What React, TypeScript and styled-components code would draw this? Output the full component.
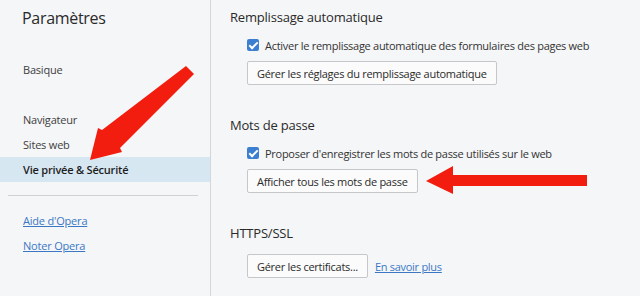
import React from "react";
import styled, { createGlobalStyle } from "styled-components";

const GlobalStyle = createGlobalStyle`
  html, body {
    margin: 0;
    padding: 0;
    background: #f5f6f8;
  }
  body {
    font-family: "Open Sans", "Noto Sans", sans-serif;
    color: #303030;
  }
`;

const App: React.FC = () => {
  return (
    <Page>
      <GlobalStyle />
      <Sidebar>
        <Title>Paramètres</Title>
        <NavGroup>
          <NavItem>Basique</NavItem>
        </NavGroup>
        <NavGroup>
          <NavItem>Navigateur</NavItem>
          <NavItem>Sites web</NavItem>
          <NavItem $active>Vie privée &amp; Sécurité</NavItem>
        </NavGroup>
        <Divider />
        <NavGroup>
          <SideLink href="#">Aide d'Opera</SideLink>
          <SideLink href="#">Noter Opera</SideLink>
        </NavGroup>
      </Sidebar>

      <Main>
        <Section>
          <SectionTitle>Remplissage automatique</SectionTitle>
          <Check>
            <Box />
            Activer le remplissage automatique des formulaires des pages web
          </Check>
          <Row>
            <Button>Gérer les réglages du remplissage automatique</Button>
          </Row>
        </Section>

        <Section>
          <SectionTitle>Mots de passe</SectionTitle>
          <Check>
            <Box />
            Proposer d'enregistrer les mots de passe utilisés sur le web
          </Check>
          <Row>
            <Button>Afficher tous les mots de passe</Button>
          </Row>
        </Section>

        <Section>
          <SectionTitle>HTTPS/SSL</SectionTitle>
          <Row>
            <Button>Gérer les certificats...</Button>
            <MainLink href="#">En savoir plus</MainLink>
          </Row>
        </Section>
      </Main>

      <Overlay width="640" height="296" viewBox="0 0 640 296">
        <path
          d="M186 66 L194 74 L120 148 L122 152 L90 160 L98 128 L102 130 Z"
          fill="#f21d0f"
        />
        <path
          d="M426 181 L453 166 L453 175 L587 175 L587 186 L453 186 L453 194 Z"
          fill="#f21d0f"
        />
      </Overlay>
    </Page>
  );
};

export default App;

const Page = styled.div`
  position: relative;
  display: flex;
  width: 640px;
  height: 296px;
  overflow: hidden;
  background: #f5f6f8;
`;

const Sidebar = styled.nav`
  width: 211px;
  flex-shrink: 0;
  border-right: 1px solid #d4d6d9;
  padding-top: 6px;
  box-sizing: border-box;
`;

const Title = styled.h1`
  margin: 0 0 0 22px;
  font-size: 16px;
  font-weight: 400;
  letter-spacing: -0.3px;
  color: #2a2a2a;
  line-height: 24px;
  height: 51px;
`;

const NavGroup = styled.div`
  display: flex;
  flex-direction: column;
  margin-bottom: 25px;
`;

const NavItem = styled.div<{ $active?: boolean }>`
  height: 25px;
  line-height: 25px;
  padding-left: 23px;
  font-size: 11px;
  letter-spacing: -0.2px;
  font-weight: ${(p) => (p.$active ? 600 : 400)};
  color: ${(p) => (p.$active ? "#1e1e1e" : "#404040")};
  background: ${(p) => (p.$active ? "#d7e7f2" : "transparent")};
`;

const Divider = styled.hr`
  margin: -12px 12px 12px 8px;
  border: 0;
  border-top: 1px solid #cfd1d4;
`;

const SideLink = styled.a`
  height: 25px;
  line-height: 25px;
  padding-left: 23px;
  font-size: 11px;
  letter-spacing: -0.2px;
  color: #3b78c4;
  text-decoration: underline;
`;

const Main = styled.main`
  flex: 1;
  padding: 6px 0 0 19px;
`;

const Section = styled.section`
  display: flex;
  flex-direction: column;
  margin-bottom: 29px;
`;

const SectionTitle = styled.h2`
  margin: 0 0 8px;
  font-size: 13px;
  font-weight: 400;
  letter-spacing: -0.2px;
  line-height: 22px;
  color: #2a2a2a;
`;

const Check = styled.label`
  display: flex;
  align-items: center;
  gap: 6px;
  height: 18px;
  margin: 0 0 5px 17px;
  font-size: 11px;
  letter-spacing: -0.28px;
  color: #333;
`;

const Box = styled.span`
  position: relative;
  width: 12px;
  height: 12px;
  border-radius: 2px;
  background: #3c7fd0;
  flex-shrink: 0;
  &::after {
    content: "";
    position: absolute;
    left: 4px;
    top: 1px;
    width: 3px;
    height: 7px;
    border: solid #fff;
    border-width: 0 2px 2px 0;
    transform: rotate(45deg);
  }
`;

const Row = styled.div`
  display: flex;
  align-items: center;
  gap: 7px;
  margin: 2px 0 0 17px;
`;

const Button = styled.button`
  height: 24px;
  padding: 0 9px;
  font-family: inherit;
  font-size: 11px;
  letter-spacing: -0.28px;
  color: #2a2a2a;
  background: #fbfbfb;
  border: 1px solid #c5c7ca;
  border-radius: 2px;
`;

const MainLink = styled.a`
  font-size: 11px;
  letter-spacing: -0.28px;
  color: #3b78c4;
  text-decoration: underline;
`;

const Overlay = styled.svg`
  position: absolute;
  left: 0;
  top: 0;
  pointer-events: none;
`;
